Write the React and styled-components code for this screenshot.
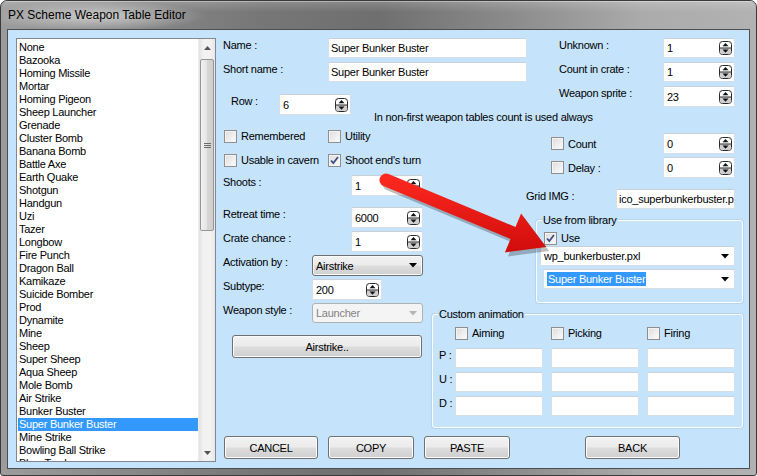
import React from 'react';
import styled, { createGlobalStyle, css } from 'styled-components';

const GlobalStyle = createGlobalStyle`
  html, body { margin: 0; padding: 0; background: #fff; }
  body {
    font-family: "Liberation Sans", Arial, sans-serif;
    font-size: 11px;
    letter-spacing: -0.25px;
    color: #000;
  }
  * { box-sizing: border-box; }
`;

const weapons = [
  'None', 'Bazooka', 'Homing Missile', 'Mortar', 'Homing Pigeon', 'Sheep Launcher',
  'Grenade', 'Cluster Bomb', 'Banana Bomb', 'Battle Axe', 'Earth Quake', 'Shotgun',
  'Handgun', 'Uzi', 'Tazer', 'Longbow', 'Fire Punch', 'Dragon Ball', 'Kamikaze',
  'Suicide Bomber', 'Prod', 'Dynamite', 'Mine', 'Sheep', 'Super Sheep', 'Aqua Sheep',
  'Mole Bomb', 'Air Strike', 'Bunker Buster', 'Super Bunker Buster', 'Mine Strike',
  'Bowling Ball Strike', 'Blow Torch',
];

const Window = styled.div`
  position: relative;
  width: 757px;
  height: 476px;
  border: 1px solid #3a3a3a;
  border-radius: 7px 7px 3px 3px;
  overflow: hidden;
  display: flex;
  flex-direction: column;
  background: linear-gradient(90deg, #9c9c9c 0%, #8e8e8e 12%, #767676 35%, #6f6f6f 50%, #8c8c8c 68%, #ababab 85%, #b2b2b2 100%);
`;

const TitleBar = styled.div`
  height: 28px;
  display: flex;
  align-items: center;
  padding-left: 7px;
  background:
    radial-gradient(ellipse 110px 15px at 95px 15px, rgba(225,225,225,0.75), rgba(225,225,225,0) 100%),
    linear-gradient(180deg, rgba(255,255,255,0.18), rgba(255,255,255,0) 40%);
  box-shadow: inset 0 1px 0 rgba(255,255,255,0.35);
`;

const Title = styled.span`
  font-family: "Liberation Sans", Arial, sans-serif;
  font-size: 12px;
  letter-spacing: 0;
  color: #000;
`;

const Frame = styled.div`
  flex: 1;
  padding: 0 6px 6px 6px;
  display: flex;
`;

const Client = styled.div`
  flex: 1;
  display: flex;
  border: 1px solid #4e4e4e;
  background: #c5e3fb;
  padding: 8px 0 0 8px;
  overflow: hidden;
`;

/* ---------- list box ---------- */

const ListBox = styled.div`
  width: 200px;
  height: 424px;
  flex: none;
  display: flex;
  border: 1px solid #828790;
  background: #fff;
`;

const ListItems = styled.div`
  flex: 1;
  padding: 2px 0 0 1px;
  overflow: hidden;
`;

const Item = styled.div`
  height: 13px;
  line-height: 13px;
  padding-left: 1px;
  white-space: nowrap;
  ${p => p.$selected && css`
    background: #3399ff;
    color: #fff;
  `}
`;

const ScrollBar = styled.div`
  width: 17px;
  display: flex;
  flex-direction: column;
  align-items: center;
  background: linear-gradient(90deg, #e3e3e3, #f2f2f2 30%, #f2f2f2 70%, #e8e8e8);
  border-left: 1px solid #ececec;
`;

const ScrollArrow = styled.div`
  height: 17px;
  width: 100%;
  display: flex;
  align-items: center;
  justify-content: center;
`;

const Thumb = styled.div`
  width: 14px;
  height: 172px;
  margin-top: 3px;
  border: 1px solid #959595;
  border-radius: 2px;
  background: linear-gradient(90deg, #f1f1f1, #e4e4e4 50%, #d6d6d6 51%, #cfcfcf);
  display: flex;
  align-items: center;
  justify-content: center;
`;

const Track = styled.div`
  flex: 1;
`;

/* ---------- form area ---------- */

const RightArea = styled.div`
  flex: 1;
  margin-left: 7px;
  display: flex;
  flex-direction: column;
`;

const Columns = styled.div`
  display: flex;
  align-items: flex-start;
`;

const Col = styled.div`
  display: flex;
  flex-direction: column;
  width: ${p => p.$w}px;
  margin-left: ${p => p.$ml || 0}px;
`;

const Row = styled.div`
  display: flex;
  align-items: ${p => p.$align || 'flex-start'};
  margin-top: ${p => p.$mt || 0}px;
  padding-left: ${p => p.$pl || 0}px;
`;

const Label = styled.div`
  width: ${p => p.$w}px;
  flex: none;
  padding-top: 1px;
  line-height: 13px;
  white-space: nowrap;
`;

const fieldBox = css`
  width: ${p => p.$w}px;
  height: ${p => p.$h || 20}px;
  flex: none;
  display: flex;
  align-items: center;
  background: #fff;
  border: 1px solid #d7dee6;
  border-top-color: #c9d0d8;
  border-radius: 2px;
  padding: 0 2px;
  white-space: nowrap;
  overflow: hidden;
`;

const TextBox = styled.div`
  ${fieldBox}
`;

const SpinBox = styled.div`
  ${fieldBox}
  justify-content: space-between;
  padding: 0 2px 0 3px;
`;

const Note = styled.div`
  margin-top: -4px;
  padding-left: 151px;
  line-height: 13px;
`;

/* ---------- checkboxes ---------- */

const CheckWrap = styled.div`
  display: flex;
  align-items: center;
  gap: 4px;
  height: 14px;
  width: ${p => (p.$w ? `${p.$w}px` : 'auto')};
  margin-left: ${p => p.$ml || 0}px;
  margin-top: ${p => p.$mt || 0}px;
  flex: none;
  white-space: nowrap;
`;

const Box = styled.span`
  width: 13px;
  height: 13px;
  flex: none;
  border: 1px solid #8f8f8f;
  background: linear-gradient(135deg, #dcdcdc, #f6f6f6 80%);
  box-shadow: inset 0 0 0 1px #f4f4f4;
  display: flex;
  align-items: center;
  justify-content: center;
`;

const Check = ({ label, checked, w, ml, mt }) => (
  <CheckWrap $w={w} $ml={ml} $mt={mt}>
    <Box>
      {checked && (
        <svg width="9" height="9" viewBox="0 0 9 9">
          <path d="M1 4.5 L3.3 7 L8 1" fill="none" stroke="#3b4f86" strokeWidth="1.8" />
        </svg>
      )}
    </Box>
    <span>{label}</span>
  </CheckWrap>
);

const SpinIcon = () => (
  <svg width="13" height="14" viewBox="0 0 13 14">
    <rect x="0.5" y="0.5" width="12" height="13" rx="3" fill="#fff" stroke="#2a2a2a" />
    <path d="M1 7 H12 V10.5 Q12 13 9.5 13 H3.5 Q1 13 1 10.5 Z" fill="#cfcfcf" />
    <path d="M1 7 H12" stroke="#2a2a2a" />
    <path d="M6.5 2 L9.5 5.2 H3.5 Z" fill="#111" />
    <path d="M3.5 8.6 H9.5 L6.5 11.8 Z" fill="#111" />
  </svg>
);

const Spin = ({ value, w = 72, h = 21 }) => (
  <SpinBox $w={w} $h={h}>
    <span>{value}</span>
    <SpinIcon />
  </SpinBox>
);

/* ---------- combos & buttons ---------- */

const comboVariants = {
  button: css`
    border: 1px solid #707070;
    border-radius: 3px;
    background: linear-gradient(180deg, #f2f2f2 0%, #ebebeb 48%, #dddddd 52%, #cfcfcf 100%);
    box-shadow: inset 0 0 0 1px #fbfbfb;
  `,
  edit: css`
    border: 1px solid #d7dee6;
    border-top-color: #c9d0d8;
    border-radius: 2px;
    background: #fff;
  `,
  disabled: css`
    border: 1px solid #adb2b5;
    border-radius: 3px;
    background: #f4f4f4;
    color: #838383;
  `,
};

const ComboBox = styled.div`
  width: ${p => p.$w}px;
  height: ${p => p.$h || 21}px;
  margin-left: ${p => p.$ml || 0}px;
  flex: none;
  display: flex;
  align-items: center;
  justify-content: space-between;
  padding: 0 5px 0 3px;
  white-space: nowrap;
  ${p => comboVariants[p.$variant]}
`;

const Selected = styled.span`
  background: #3399ff;
  color: #fff;
  padding: 0 1px;
  line-height: 14px;
`;

const Caret = ({ color = '#000' }) => (
  <svg width="8" height="5" viewBox="0 0 8 5">
    <path d="M0 0 H8 L4 4.5 Z" fill={color} />
  </svg>
);

const Combo = ({ children, variant, w, h, ml }) => (
  <ComboBox $variant={variant} $w={w} $h={h} $ml={ml}>
    <span>{children}</span>
    <Caret color={variant === 'disabled' ? '#b5b5b5' : '#000'} />
  </ComboBox>
);

const PushButton = styled.div`
  width: ${p => p.$w}px;
  height: ${p => p.$h || 23}px;
  margin-left: ${p => p.$ml || 0}px;
  margin-top: ${p => p.$mt || 0}px;
  flex: none;
  display: flex;
  align-items: center;
  justify-content: center;
  border: 1px solid #707070;
  border-radius: 3px;
  background: linear-gradient(180deg, #f2f2f2 0%, #ebebeb 48%, #dddddd 52%, #cfcfcf 100%);
  box-shadow: inset 0 0 0 1px #fbfbfb;
`;

/* ---------- group boxes ---------- */

const Group = styled.fieldset`
  margin: ${p => p.$mt || 0}px 0 0 ${p => p.$ml || 0}px;
  width: ${p => p.$w}px;
  padding: ${p => p.$pad};
  border: 1px solid #fbfdff;
  border-radius: 3px;
  box-shadow: 0 0 0 1px rgba(160, 185, 205, 0.35);
  min-width: 0;
  display: flex;
  flex-direction: column;
`;

const Legend = styled.legend`
  padding: 0 1px;
  margin-left: ${p => p.$ml || 0}px;
  line-height: 13px;
`;

const AnimGrid = styled.div`
  display: grid;
  grid-template-columns: 9px 88px 88px 88px;
  column-gap: 8px;
  row-gap: 4px;
  margin-top: ${p => p.$mt || 0}px;
  align-items: ${p => p.$align || 'start'};
`;

const RowLabel = styled.div`
  padding: 1px 0 0 1px;
  line-height: 13px;
  white-space: nowrap;
`;

const ButtonBar = styled.div`
  display: flex;
  margin-top: 8px;
`;

const ArrowOverlay = styled.svg`
  position: absolute;
  left: 0;
  top: 0;
  pointer-events: none;
`;

const arrowPath =
  'M382.5 185 L509.5 238 L503.9 251.4 L545.2 245.9 L520.1 212.6 L514.5 226 L387.5 173 A6.5 6.5 0 0 0 382.5 185 Z';

export default function App() {
  return (
    <>
      <GlobalStyle />
      <Window>
        <TitleBar>
          <Title>PX Scheme Weapon Table Editor</Title>
        </TitleBar>
        <Frame>
          <Client>
            <ListBox>
              <ListItems>
                {weapons.map(w => (
                  <Item key={w} $selected={w === 'Super Bunker Buster'}>{w}</Item>
                ))}
              </ListItems>
              <ScrollBar>
                <ScrollArrow>
                  <svg width="7" height="4" viewBox="0 0 7 4"><path d="M0 4 L3.5 0 L7 4 Z" fill="#555" /></svg>
                </ScrollArrow>
                <Thumb>
                  <svg width="7" height="7" viewBox="0 0 7 7">
                    <path d="M0 1.5 H7 M0 3.5 H7 M0 5.5 H7" stroke="#6c6c6c" strokeWidth="1" />
                  </svg>
                </Thumb>
                <Track />
                <ScrollArrow>
                  <svg width="7" height="4" viewBox="0 0 7 4"><path d="M0 0 H7 L3.5 4 Z" fill="#555" /></svg>
                </ScrollArrow>
              </ScrollBar>
            </ListBox>

            <RightArea>
              <Columns>
                <Col $w={304}>
                  <Row>
                    <Label $w={105}>Name :</Label>
                    <TextBox $w={199}>Super Bunker Buster</TextBox>
                  </Row>
                  <Row $mt={4}>
                    <Label $w={105}>Short name :</Label>
                    <TextBox $w={199}>Super Bunker Buster</TextBox>
                  </Row>
                  <Row $mt={12} $pl={8}>
                    <Label $w={48}>Row :</Label>
                    <Spin value="6" />
                  </Row>
                </Col>
                <Col $w={176} $ml={32}>
                  <Row>
                    <Label $w={104}>Unknown :</Label>
                    <Spin value="1" h={20} />
                  </Row>
                  <Row $mt={4}>
                    <Label $w={104}>Count in crate :</Label>
                    <Spin value="1" h={20} />
                  </Row>
                  <Row $mt={4}>
                    <Label $w={104}>Weapon sprite :</Label>
                    <Spin value="23" />
                  </Row>
                </Col>
              </Columns>

              <Note>In non-first weapon tables count is used always</Note>

              <Columns>
                <Col $w={200}>
                  <Row $mt={5} $pl={1}>
                    <Check label="Remembered" w={104} />
                    <Check label="Utility" />
                  </Row>
                  <Row $mt={10} $pl={1}>
                    <Check label="Usable in cavern" w={104} />
                    <Check label="Shoot end's turn" checked />
                  </Row>
                  <Row $mt={8}>
                    <Label $w={128}>Shoots :</Label>
                    <Spin value="1" />
                  </Row>
                  <Row $mt={11}>
                    <Label $w={128}>Retreat time :</Label>
                    <Spin value="6000" />
                  </Row>
                  <Row $mt={3}>
                    <Label $w={128}>Crate chance :</Label>
                    <Spin value="1" />
                  </Row>
                  <Row $mt={3}>
                    <Label $w={89}>Activation by :</Label>
                    <Combo variant="button" w={111}>Airstrike</Combo>
                  </Row>
                  <Row $mt={3}>
                    <Label $w={89}>Subtype:</Label>
                    <Spin value="200" w={70} />
                  </Row>
                  <Row $mt={3}>
                    <Label $w={89}>Weapon style :</Label>
                    <Combo variant="disabled" w={111} h={20}>Launcher</Combo>
                  </Row>
                  <PushButton $w={190} $ml={9} $mt={12}>Airstrike..</PushButton>
                </Col>

                <Col $w={315} $ml={9}>
                  <Row $mt={9} $align="center">
                    <Check label="Count" w={112} ml={119} />
                    <Spin value="0" />
                  </Row>
                  <Row $mt={3} $align="center">
                    <Check label="Delay :" w={112} ml={119} />
                    <Spin value="0" />
                  </Row>
                  <Row $mt={11} $pl={94}>
                    <Label $w={90}>Grid IMG :</Label>
                    <TextBox $w={119}>ico_superbunkerbuster.pxl</TextBox>
                  </Row>

                  <Group $w={207} $ml={104} $mt={5} $pad="0 0 13px 3px">
                    <Legend $ml={2}>Use from library</Legend>
                    <Check label="Use" checked ml={4} mt={4} />
                    <Row $mt={1}>
                      <Combo variant="edit" w={195} h={20}>wp_bunkerbuster.pxl</Combo>
                    </Row>
                    <Row $mt={3}>
                      <ComboBox $variant="edit" $w={192} $h={20} $ml={3}>
                        <Selected>Super Bunker Buster</Selected>
                        <Caret />
                      </ComboBox>
                    </Row>
                  </Group>

                  <Group $w={311} $mt={5} $pad="0 0 11px 5px">
                    <Legend>Custom animation</Legend>
                    <AnimGrid $mt={5} $align="center">
                      <span />
                      <Check label="Aiming" />
                      <Check label="Picking" />
                      <Check label="Firing" />
                    </AnimGrid>
                    <AnimGrid $mt={8}>
                      {['P :', 'U :', 'D :'].map(l => (
                        <React.Fragment key={l}>
                          <RowLabel>{l}</RowLabel>
                          <TextBox $w={88} />
                          <TextBox $w={88} />
                          <TextBox $w={88} />
                        </React.Fragment>
                      ))}
                    </AnimGrid>
                  </Group>
                </Col>
              </Columns>

              <ButtonBar>
                <PushButton $w={94} $ml={1}>CANCEL</PushButton>
                <PushButton $w={86} $ml={10}>COPY</PushButton>
                <PushButton $w={86} $ml={10}>PASTE</PushButton>
                <PushButton $w={95} $ml={75}>BACK</PushButton>
              </ButtonBar>
            </RightArea>
          </Client>
        </Frame>

        <ArrowOverlay width="757" height="476" viewBox="0 0 757 476">
          <defs>
            <linearGradient id="arrowFill" x1="0" y1="0" x2="0" y2="1">
              <stop offset="0" stopColor="#ff2a20" />
              <stop offset="1" stopColor="#d00c0c" />
            </linearGradient>
          </defs>
          <g transform="translate(3 4)" opacity="0.25">
            <path d={arrowPath} fill="#000" />
          </g>
          <path d={arrowPath} fill="url(#arrowFill)" />
        </ArrowOverlay>
      </Window>
    </>
  );
}
